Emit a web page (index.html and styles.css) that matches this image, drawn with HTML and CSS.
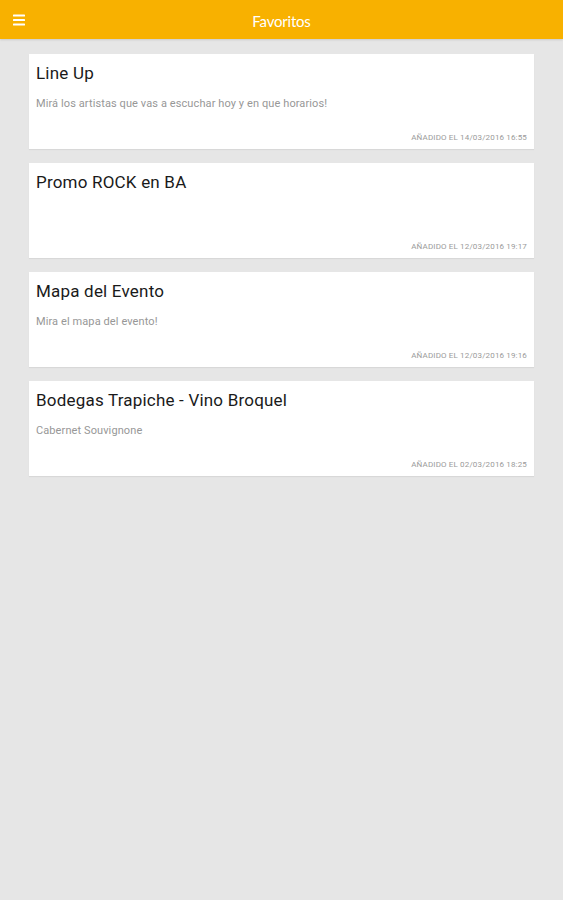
FILE: index.html
```html
<!DOCTYPE html>
<html>
<head>
  <meta charset="UTF-8">
  <title>Favoritos</title>
  <link rel="stylesheet" href="styles.css">
</head>
<body>
  <div class="topbar">
    <svg class="menu-icon" viewBox="0 0 12 12" xmlns="http://www.w3.org/2000/svg">
      <rect x="0" y="0.5" width="12" height="2" rx="0.6" fill="#fff"/>
      <rect x="0" y="5" width="12" height="2" rx="0.6" fill="#fff"/>
      <rect x="0" y="9.5" width="12" height="2" rx="0.6" fill="#fff"/>
    </svg>
    <div class="topbar-title">Favoritos</div>
  </div>

  <div class="list">
    <div class="card">
      <div class="card-title">Line Up</div>
      <div class="card-text">Mirá los artistas que vas a escuchar hoy y en que horarios!</div>
      <div class="card-date">Añadido el 14/03/2016 16:55</div>
    </div>
    <div class="card">
      <div class="card-title">Promo ROCK en BA</div>
      <div class="card-text"></div>
      <div class="card-date">Añadido el 12/03/2016 19:17</div>
    </div>
    <div class="card">
      <div class="card-title">Mapa del Evento</div>
      <div class="card-text">Mira el mapa del evento!</div>
      <div class="card-date">Añadido el 12/03/2016 19:16</div>
    </div>
    <div class="card">
      <div class="card-title">Bodegas Trapiche - Vino Broquel</div>
      <div class="card-text">Cabernet Souvignone</div>
      <div class="card-date">Añadido el 02/03/2016 18:25</div>
    </div>
  </div>
</body>
</html>
```

FILE: styles.css
```css
body {
  margin: 0;
  font-family: Roboto, 'Noto Sans', sans-serif;
  background-color: #e6e6e6;
  width: 563px;
  height: 900px;
}
.topbar {
  position: relative;
  height: 39px;
  background-color: #f8b100;
  display: flex;
  align-items: center;
  justify-content: center;
  box-shadow: 0 1px 2px rgba(0, 0, 0, 0.12);
}
.menu-icon {
  position: absolute;
  left: 13px;
  top: 14px;
  width: 12px;
  height: 12px;
}
.topbar-title {
  color: #fff;
  font-family: Lato, 'Open Sans', sans-serif;
  font-size: 15px;
  letter-spacing: -0.2px;
  padding-top: 2px;
}
.list {
  display: flex;
  flex-direction: column;
  gap: 14px;
  padding: 15px 29px 0 29px;
}
.card {
  background-color: #fff;
  height: 95px;
  box-sizing: border-box;
  padding: 9px 7px 0 7px;
  display: flex;
  flex-direction: column;
  box-shadow: 0 1px 1px rgba(0, 0, 0, 0.06);
}
.card-title {
  font-size: 17px;
  letter-spacing: 0.2px;
  color: #1a1a1a;
  line-height: 20px;
}
.card-text {
  margin-top: 14px;
  font-size: 11px;
  letter-spacing: 0.1px;
  color: #979797;
  line-height: 14px;
  height: 14px;
}
.card-date {
  margin-top: auto;
  margin-bottom: 7px;
  align-self: flex-end;
  font-size: 8px;
  letter-spacing: 0.15px;
  color: #9a9a9a;
  text-transform: uppercase;
}
```
